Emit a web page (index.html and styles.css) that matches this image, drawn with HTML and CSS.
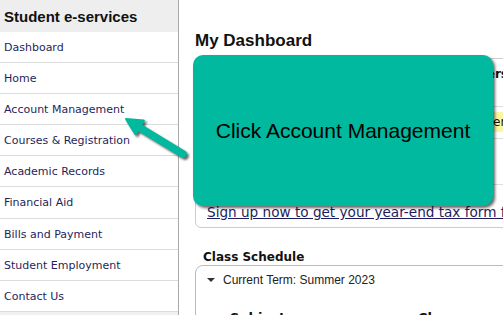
FILE: index.html
```html
<!DOCTYPE html>
<html lang="en">
<head>
  <meta charset="UTF-8">
  <meta name="viewport" content="width=device-width, initial-scale=1.0">
  <title>Student e-services – My Dashboard</title>
  <link rel="stylesheet" href="styles.css">
</head>
<body>
  <nav class="sidebar">
    <div class="sidebar-title">Student e-services</div>
    <ul class="menu">
      <li><a href="#">Dashboard</a></li>
      <li><a href="#">Home</a></li>
      <li><a href="#">Account Management</a></li>
      <li><a href="#">Courses &amp; Registration</a></li>
      <li><a href="#">Academic Records</a></li>
      <li><a href="#">Financial Aid</a></li>
      <li><a href="#">Bills and Payment</a></li>
      <li><a href="#">Student Employment</a></li>
      <li><a href="#">Contact Us</a></li>
    </ul>
  </nav>

  <main class="main">
    <h1>My Dashboard</h1>

    <div class="panel">
      <div class="panel-head">Holds and Reminders</div>
      <div class="alert">Fall 2023 registration is now open</div>
      <div class="panel-row"></div>
      <p class="panel-link"><a href="#">Sign up now to get your year-end tax form faster</a></p>
    </div>

    <h2>Class Schedule</h2>
    <div class="schedule">
      <div class="term"><span class="caret"></span>Current Term: Summer 2023</div>
      <div class="sched-head">
        <span class="col-subject">Subject</span>
        <span>Class</span>
      </div>
    </div>
  </main>

  <!-- walkthrough overlay -->
  <svg class="pointer" width="90" height="65" viewBox="0 0 90 65">
    <line x1="27" y1="21" x2="73" y2="49" stroke="#00b99e" stroke-width="7.5" stroke-linecap="round"/>
    <polygon points="16,14 25.4,29.2 33.8,15.6" fill="#00b99e" stroke="#00b99e" stroke-width="2" stroke-linejoin="round"/>
  </svg>
  <div class="callout">Click Account Management</div>
</body>
</html>
```

FILE: styles.css
```css
body {
  margin: 0;
  height: 315px;
  overflow: hidden;
  display: flex;
  background: #fff;
  font-family: 'DejaVu Sans', sans-serif;
  color: #111;
}
.sidebar {
  width: 178px;
  flex: none;
  border-right: 1px solid #aaa;
  background: #f0f0f0;
}
.sidebar-title {
  height: 32px;
  line-height: 33px;
  padding-left: 4px;
  background: #eeeeee;
  font-family: 'Liberation Sans', Arial, sans-serif;
  font-weight: bold;
  font-size: 15px;
  color: #111;
}
.menu {
  list-style: none;
  margin: 0;
  padding: 0;
}
.menu li {
  height: 30.1px;
  line-height: 32px;
  border-bottom: 1px solid #dcdcdc;
  background: #fff;
  padding-left: 4px;
  font-size: 11px;
  overflow: hidden;
}
.menu a {
  color: #1f1f5a;
  text-decoration: none;
}
.main {
  flex: 1;
  min-width: 0;
  padding: 31px 0 0 16px;
  overflow: hidden;
}
h1 {
  margin: 0;
  font-family: 'Liberation Sans', Arial, sans-serif;
  font-size: 17px;
  line-height: 20px;
}
.panel {
  width: 330px;
  margin-top: 7px;
  border: 1px solid #ccc;
  border-radius: 6px;
}
.panel-head {
  height: 48px;
  padding: 7px 18px 0 0;
  box-sizing: border-box;
  border-bottom: 1px solid #ddd;
  text-align: right;
  font-weight: bold;
  font-size: 12px;
  line-height: 16px;
  white-space: nowrap;
}
.alert {
  margin-top: 5px;
  height: 20px;
  line-height: 20px;
  padding-right: 18px;
  background: #fbf6a4;
  text-align: right;
  font-size: 12px;
  white-space: nowrap;
}
.panel-row {
  margin-top: 6px;
  height: 45px;
  border-top: 1px solid #ddd;
  border-bottom: 1px solid #ddd;
}
.panel-link {
  margin: 0;
  padding: 19px 0 6px 11px;
  font-size: 13.6px;
  line-height: 17px;
  white-space: nowrap;
}
.panel-link a {
  color: #1c1c5e;
}
h2 {
  margin: 21px 0 0;
  padding-left: 8px;
  font-size: 12px;
  line-height: 16px;
}
.schedule {
  width: 330px;
  height: 80px;
  border: 1px solid #bbb;
  border-radius: 8px 0 0 0;
}
.term {
  display: flex;
  align-items: center;
  padding: 6px 0 0 11px;
  font-family: 'Liberation Sans', Arial, sans-serif;
  font-size: 12px;
  line-height: 16px;
  color: #222;
}
.caret {
  width: 0;
  height: 0;
  border-left: 4px solid transparent;
  border-right: 4px solid transparent;
  border-top: 4px solid #333;
  margin-right: 8px;
}
.sched-head {
  display: flex;
  margin-top: 22px;
  padding-left: 34px;
  font-weight: bold;
  font-size: 13px;
  line-height: 16px;
}
.col-subject {
  width: 188px;
}
.pointer {
  position: absolute;
  left: 110px;
  top: 105px;
  filter: drop-shadow(2px 2px 1px rgba(0,0,0,0.6));
}
.callout {
  position: absolute;
  left: 193px;
  top: 55px;
  width: 300px;
  height: 151px;
  box-sizing: border-box;
  padding-top: 64px;
  background: #00b99e;
  border-radius: 10px;
  box-shadow: 2px 2px 3px rgba(0,0,0,0.6);
  text-align: center;
  font-family: 'Liberation Sans', Arial, sans-serif;
  font-size: 21px;
  line-height: 24px;
  color: #000;
}
```
